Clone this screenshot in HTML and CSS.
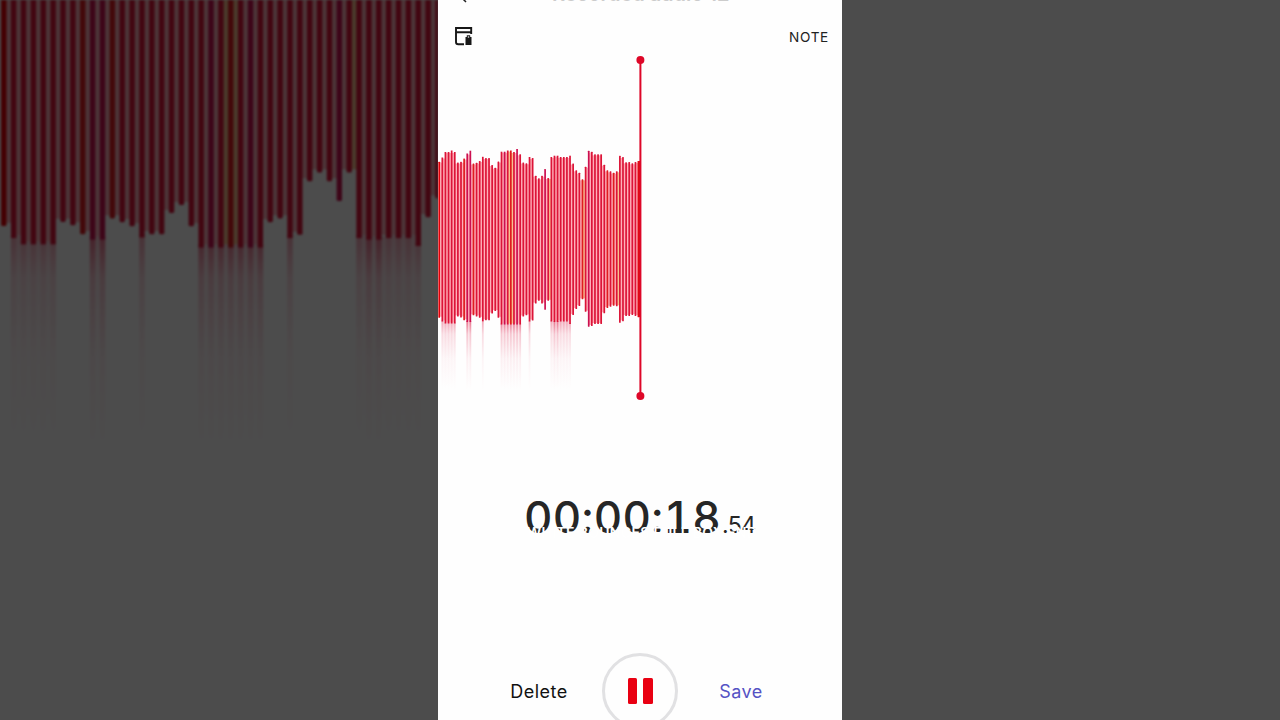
FILE: index.html
```
<!DOCTYPE html>
<html lang="en">
<head>
  <meta charset="UTF-8" />
  <meta name="viewport" content="width=device-width, initial-scale=1.0"/>
  <title>Voice Recorder</title>
  <link rel="stylesheet" href="styles.css">
</head>
<body>
  <div class="stage">
    <div class="side">
      <svg class="side-wave" viewBox="438 246.36 138.26 227.28" preserveAspectRatio="none"><use href="#wave"/></svg>
    </div>

    <main class="phone">
      <header class="title-bar">
        <svg class="back" width="10" height="14" viewBox="0 0 10 14"><path d="M8 1L2 7l6 6"/></svg>
        <h1>Recorded audio 12</h1>
      </header>

      <div class="toolbar">
        <svg class="list-icon" width="18" height="19" viewBox="0 0 18 19">
          <path d="M16.2 7V1H1v14q0 2.3 2.3 2.3H9M1 5.2h15.2"/>
          <path class="solid" d="M10.5 10h1.3V8.3h3.4V10h1.3v8h-6z"/>
          <path class="slot" d="M12.8 10h1.4"/>
        </svg>
        <button class="note">NOTE</button>
      </div>

      <svg class="wave-view" width="404" height="350" viewBox="438 54 404 350">
        <defs>
          <linearGradient id="fade" gradientUnits="userSpaceOnUse" x1="0" y1="320" x2="0" y2="390">
            <stop offset="0" stop-color="#dc1440" stop-opacity=".65"/>
            <stop offset=".2" stop-color="#dc1440" stop-opacity=".25"/>
            <stop offset=".55" stop-color="#dc1440" stop-opacity=".07"/>
            <stop offset="1" stop-color="#dc1440" stop-opacity="0"/>
          </linearGradient>
        </defs>
        <g id="wave"></g>
        <g class="playhead">
          <path d="M640.4 60v336"/>
          <circle cx="640.4" cy="60" r="4"/>
          <circle cx="640.4" cy="396" r="4"/>
        </g>
      </svg>

      <div class="timer">
        <span class="time">00:00:18</span><span class="hundredths">.54</span>
        <div class="caption">WHITE BOUNCES FULL BOX END</div>
      </div>

      <div class="controls">
        <button class="delete">Delete</button>
        <button class="pause" aria-label="Pause"><i></i><i></i></button>
        <button class="save">Save</button>
      </div>
    </main>

    <div class="side"></div>
  </div>

  <script src="wave.js"></script>
</body>
</html>
```
FILE: styles.css
```
body {
  margin: 0;
  overflow: hidden;
  background: #4c4c4c;
  font-family: Inter, "Liberation Sans", sans-serif;
}

button { padding: 0; border: none; background: none; font-family: inherit; }

.stage { display: grid; grid-template-columns: 438px 404px 438px; width: 1280px; height: 720px; }

.side { background: #4c4c4c; overflow: hidden; }
.side-wave { display: block; width: 438px; height: 720px; filter: brightness(0.3) blur(0.9px); }

.phone { display: flex; flex-direction: column; background: #fefefe; overflow: hidden; }

.title-bar { display: flex; align-items: flex-end; height: 20px; box-sizing: border-box; padding-left: 20px; margin-top: -17px; flex: none; }
.title-bar h1 { margin: 0 0 -1px 84px; font-size: 20px; line-height: 20px; font-weight: 600; color: #ccc; white-space: nowrap; }
.back { fill: none; stroke: #222; stroke-width: 1.5; }

.toolbar { display: flex; justify-content: space-between; align-items: center; height: 51px; padding: 16px 13px 0 17px; box-sizing: border-box; flex: none; }
.list-icon { fill: none; stroke: #171717; stroke-width: 1.9; }
.list-icon .solid { fill: #171717; stroke: none; }
.list-icon .slot { stroke: #fff; stroke-width: 1.2; }
.note { font-size: 13.6px; letter-spacing: 0.7px; color: #222; }

.wave-view { display: block; flex: none; }
.playhead { fill: #de0728; stroke: none; }
.playhead path { stroke: #de0728; stroke-width: 2; }

.timer { position: relative; height: 60px; margin-top: 86px; padding-left: 86px; white-space: nowrap; flex: none; color: #262626; }
.time { font-size: 44px; line-height: 54px; font-weight: 500; font-variant-numeric: tabular-nums; letter-spacing: 0.3px; }
.hundredths { font-size: 23px; margin-left: 1px; letter-spacing: -0.6px; }
.caption { position: absolute; left: 89px; top: 34px; height: 14px; font-size: 14px; line-height: 18px; font-weight: 600; letter-spacing: 0.3px; color: #fff; }

.controls { display: grid; grid-template-columns: 202px 0 202px; align-items: center; justify-items: center; height: 76px; margin-top: 103px; flex: none; }
.controls button { font-size: 18px; letter-spacing: 0.5px; }
.delete { color: #111; }
.save { color: #5552c4; }
.controls .pause { display: flex; align-items: center; justify-content: center; gap: 6px; width: 76px; height: 76px; box-sizing: border-box; border: 3px solid #e1e1e3; border-radius: 50%; }
.pause i { width: 9.5px; height: 26px; border-radius: 1.5px; background: #e90012; }
```
FILE: wave.js
```
// [top, bottom, 1 or 2 if the bar trails off below]
const bars = [
  [161.7,317.7,0],[157.5,321.5,1],[152,323.5,1],[152,323.5,1],[150.5,323.5,1],[152,323.5,1],
  [162.5,316.4,0],[161.7,317.5,0],[158.5,320.3,0],[153.5,322,2],[150.7,322,2],
  [163.5,315.3,0],[162.7,316.5,0],[161,317.8,0],[156.8,321.3,1],[158,320.3,0],[158,320.3,0],
  [165,313.6,0],[167.7,311.1,0],[161.5,317.8,0],
  [151.7,324.5,2],[151.7,324.5,2],[150.5,324.5,2],[150.5,324.5,2],[152,324.5,2],[149,324.5,2],[154.3,324.5,2],
  [162.5,316.5,0],[163.3,315.3,0],[157,321.5,1],[158,320.5,0],
  [175.7,303.6,0],[178.3,300.8,0],[175.7,303.6,0],[169,309.8,0],[178,300.8,0],
  [157,321.5,1],[155.7,322,2],[155.7,322,2],[157,321.5,1],[157,321.5,1],[157,321.5,1],[155.7,324,1],
  [163.5,314.9,0],[170.3,309,0],[172.7,306,0],[179.3,299.3,0],[166.7,311.7,0],
  [150.7,326.7,0],[151.7,326,0],[154.3,324,0],[154.3,324,0],[154.3,324,0],
  [164.7,313.3,0],[170.3,308,0],[171.3,306.7,0],[172.7,305.7,0],[171.3,306.3,0],
  [155.7,322.7,0],[157,321.3,0],[162.3,316,0],[162,316,0],[163.3,315,0],[162,316,0],[161,317.3,0]
];
const step = 3.115;
const purple = [9, 10, 21, 25, 34, 48];
const warm = [8, 11, 23, 46, 54, 56];
const gold = [22, 23, 35, 46, 57];

function rect(x, y, w, h, fill, rx) {
  return `<rect x="${x}" y="${y}" width="${w}" height="${h}" fill="${fill}" rx="${rx || 0}"/>`;
}

let out = rect(430, 54, 420, 430, '#fefefe');
bars.forEach(([top, bottom, trail], i) => {
  const x = 439.2 + i * step;
  let color = '#dc1438';
  if (purple.includes(i)) color = '#cc1050';
  if (warm.includes(i)) color = '#de1c20';
  if (i === 0 || i === 64) color = '#e20008';
  // light strip between this bar and the next one
  const next = bars[i + 1];
  if (next) {
    const t = Math.max(top, next[0]) + 1;
    const b = Math.min(bottom, next[1]) - 1;
    out += rect(x, t, step, b - t, gold.includes(i) ? '#f8c090' : '#ffb0b9');
  }
  if (trail) {
    out += `<rect x="${x - 0.9}" y="${bottom - 1}" width="1.8" height="${390 - bottom}" fill="url(#fade)" opacity="${trail === 2 ? 0.95 : 0.6}"/>`;
    if (next && next[2]) {
      out += `<rect x="${x + 0.9}" y="${bottom - 1}" width="1.3" height="${390 - bottom}" fill="url(#fade)" opacity=".35"/>`;
    }
  }
  out += rect(x - 0.85, top, 1.7, bottom - top, color, trail ? 0 : 0.5);
});
out += rect(637.8, 161, 2.6, 156, '#e00a14');
document.getElementById('wave').innerHTML = out;
```
